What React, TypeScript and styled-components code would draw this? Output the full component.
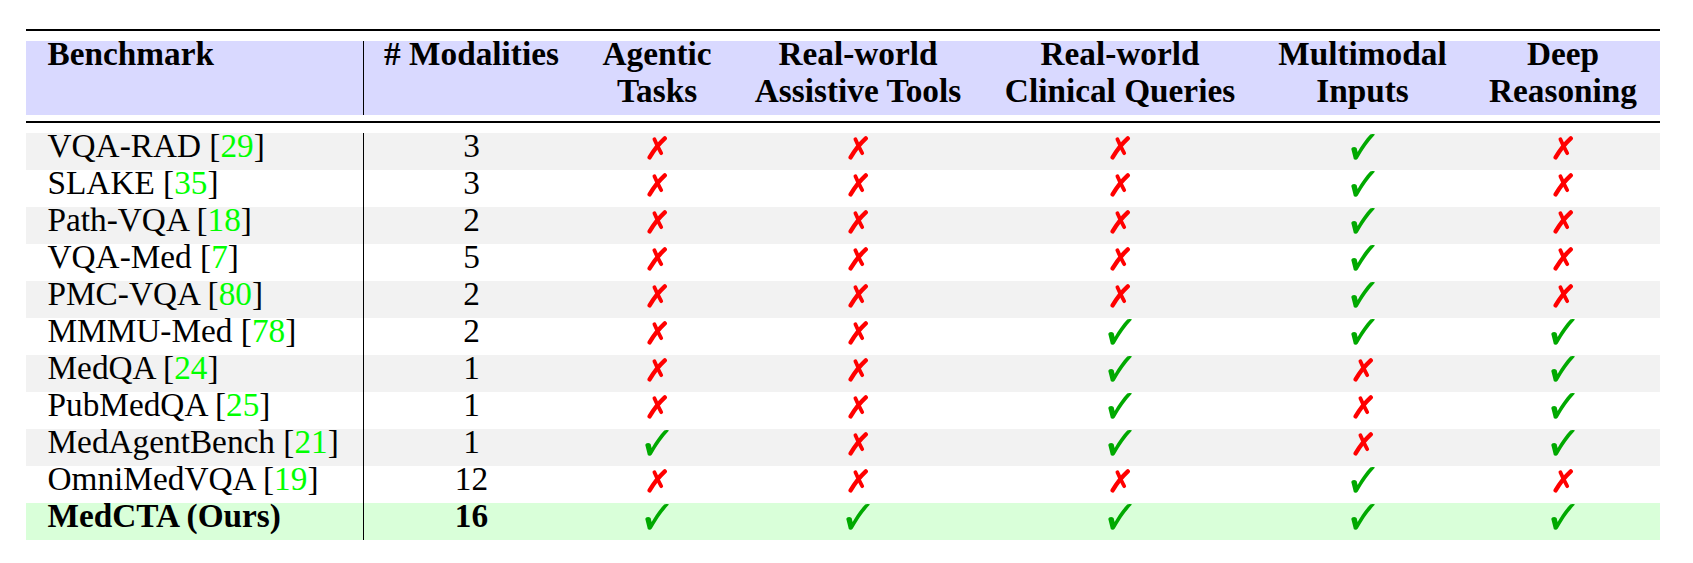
import React from "react";
import styled, { createGlobalStyle } from "styled-components";

const GlobalStyle = createGlobalStyle`
  html, body { margin: 0; padding: 0; background: #ffffff; }
  body {
    font-family: "Liberation Serif", "Times New Roman", serif;
    color: #000000;
  }
`;

const COLS = "338px 215px 156px 246px 278px 207px 194px";

const Page = styled.div`
  padding: 29px 0 0 26px;
`;

const Table = styled.div`
  width: 1634px;
  display: flex;
  flex-direction: column;
`;

const Rule = styled.div<{ $gapTop?: number }>`
  height: 2px;
  background: #000000;
  margin-top: ${(p) => p.$gapTop ?? 0}px;
`;

const HeaderRow = styled.div`
  display: grid;
  grid-template-columns: ${COLS};
  height: 74px;
  margin-top: 10px;
  background: #d9d9ff;
`;

const HeaderCell = styled.div<{ $first?: boolean }>`
  display: flex;
  flex-direction: column;
  gap: 10px;
  align-items: ${(p) => (p.$first ? "flex-start" : "center")};
  padding-left: ${(p) => (p.$first ? "21.5px" : "0")};
  border-right: ${(p) => (p.$first ? "1px solid #000000" : "none")};
  font-weight: bold;
  font-size: 33.3px;
  line-height: 26.5px;
  white-space: nowrap;
`;

const Body = styled.div`
  display: flex;
  flex-direction: column;
  margin-top: 10px;
`;

type Tone = "gray" | "white" | "green";
const toneBg: Record<Tone, string> = {
  gray: "#f2f2f2",
  white: "#ffffff",
  green: "#d9ffd9",
};

const Row = styled.div<{ $tone: Tone; $bold?: boolean }>`
  display: grid;
  grid-template-columns: ${COLS};
  height: 37px;
  background: ${(p) => toneBg[p.$tone]};
  font-size: 33.3px;
  line-height: 26.5px;
  font-weight: ${(p) => (p.$bold ? "bold" : "normal")};
  white-space: nowrap;
`;

const NameCell = styled.div`
  padding-left: 21.5px;
  border-right: 1px solid #000000;
`;

const NumCell = styled.div`
  text-align: center;
`;

const MarkCell = styled.div`
  display: flex;
  justify-content: center;
  align-items: flex-start;
  padding-top: 1px;
`;

const Cite = styled.span`
  color: #00ff00;
`;

const Check = () => (
  <svg width="24" height="26" viewBox="0 0 24 26">
    <path
      fill="#00a900"
      d="M 0.3 15 C 0.6 13 3.6 12.2 5.6 14 L 6.6 18 C 10 12 14.8 5 19.2 0.5 C 20.8 -0.2 23.2 -0.2 24 0.6 C 17.8 7 12 15.5 6.8 24.4 C 5.8 25.9 3.6 26 2.8 24.9 C 2 21.5 1 18 0.3 15 Z"
    />
  </svg>
);

const Cross = () => (
  <svg width="24" height="26" viewBox="0 0 24 26">
    <g fill="none" stroke="#ff0000" strokeLinecap="round">
      <path strokeWidth="4.3" d="M 4.6 23.4 Q 11 12.5 19.8 4.4" />
      <path strokeWidth="3.8" d="M 9.4 5.3 Q 12.5 12.5 16.2 19.2" />
    </g>
  </svg>
);

type RowData = {
  name: string;
  cite?: string;
  mods: string;
  marks: boolean[];
};

const rows: RowData[] = [
  { name: "VQA-RAD", cite: "29", mods: "3", marks: [false, false, false, true, false] },
  { name: "SLAKE", cite: "35", mods: "3", marks: [false, false, false, true, false] },
  { name: "Path-VQA", cite: "18", mods: "2", marks: [false, false, false, true, false] },
  { name: "VQA-Med", cite: "7", mods: "5", marks: [false, false, false, true, false] },
  { name: "PMC-VQA", cite: "80", mods: "2", marks: [false, false, false, true, false] },
  { name: "MMMU-Med", cite: "78", mods: "2", marks: [false, false, true, true, true] },
  { name: "MedQA", cite: "24", mods: "1", marks: [false, false, true, false, true] },
  { name: "PubMedQA", cite: "25", mods: "1", marks: [false, false, true, false, true] },
  { name: "MedAgentBench", cite: "21", mods: "1", marks: [true, false, true, false, true] },
  { name: "OmniMedVQA", cite: "19", mods: "12", marks: [false, false, false, true, false] },
];

const ours: RowData = { name: "MedCTA (Ours)", mods: "16", marks: [true, true, true, true, true] };

const headers: string[][] = [
  ["Benchmark"],
  ["# Modalities"],
  ["Agentic", "Tasks"],
  ["Real-world", "Assistive Tools"],
  ["Real-world", "Clinical Queries"],
  ["Multimodal", "Inputs"],
  ["Deep", "Reasoning"],
];

const BodyRow = ({ data, tone, bold }: { data: RowData; tone: Tone; bold?: boolean }) => (
  <Row $tone={tone} $bold={bold}>
    <NameCell>
      {data.name}
      {data.cite && (
        <>
          {" ["}
          <Cite>{data.cite}</Cite>
          {"]"}
        </>
      )}
    </NameCell>
    <NumCell>{data.mods}</NumCell>
    {data.marks.map((m, i) => (
      <MarkCell key={i}>{m ? <Check /> : <Cross />}</MarkCell>
    ))}
  </Row>
);

export default function App() {
  return (
    <>
      <GlobalStyle />
      <Page>
        <Table>
          <Rule />
          <HeaderRow>
            {headers.map((lines, i) => (
              <HeaderCell key={i} $first={i === 0}>
                {lines.map((l) => (
                  <span key={l}>{l}</span>
                ))}
              </HeaderCell>
            ))}
          </HeaderRow>
          <Rule $gapTop={6} />
          <Body>
            {rows.map((r, i) => (
              <BodyRow key={r.name} data={r} tone={i % 2 === 0 ? "gray" : "white"} />
            ))}
            <BodyRow data={ours} tone="green" bold />
          </Body>
        </Table>
      </Page>
    </>
  );
}
